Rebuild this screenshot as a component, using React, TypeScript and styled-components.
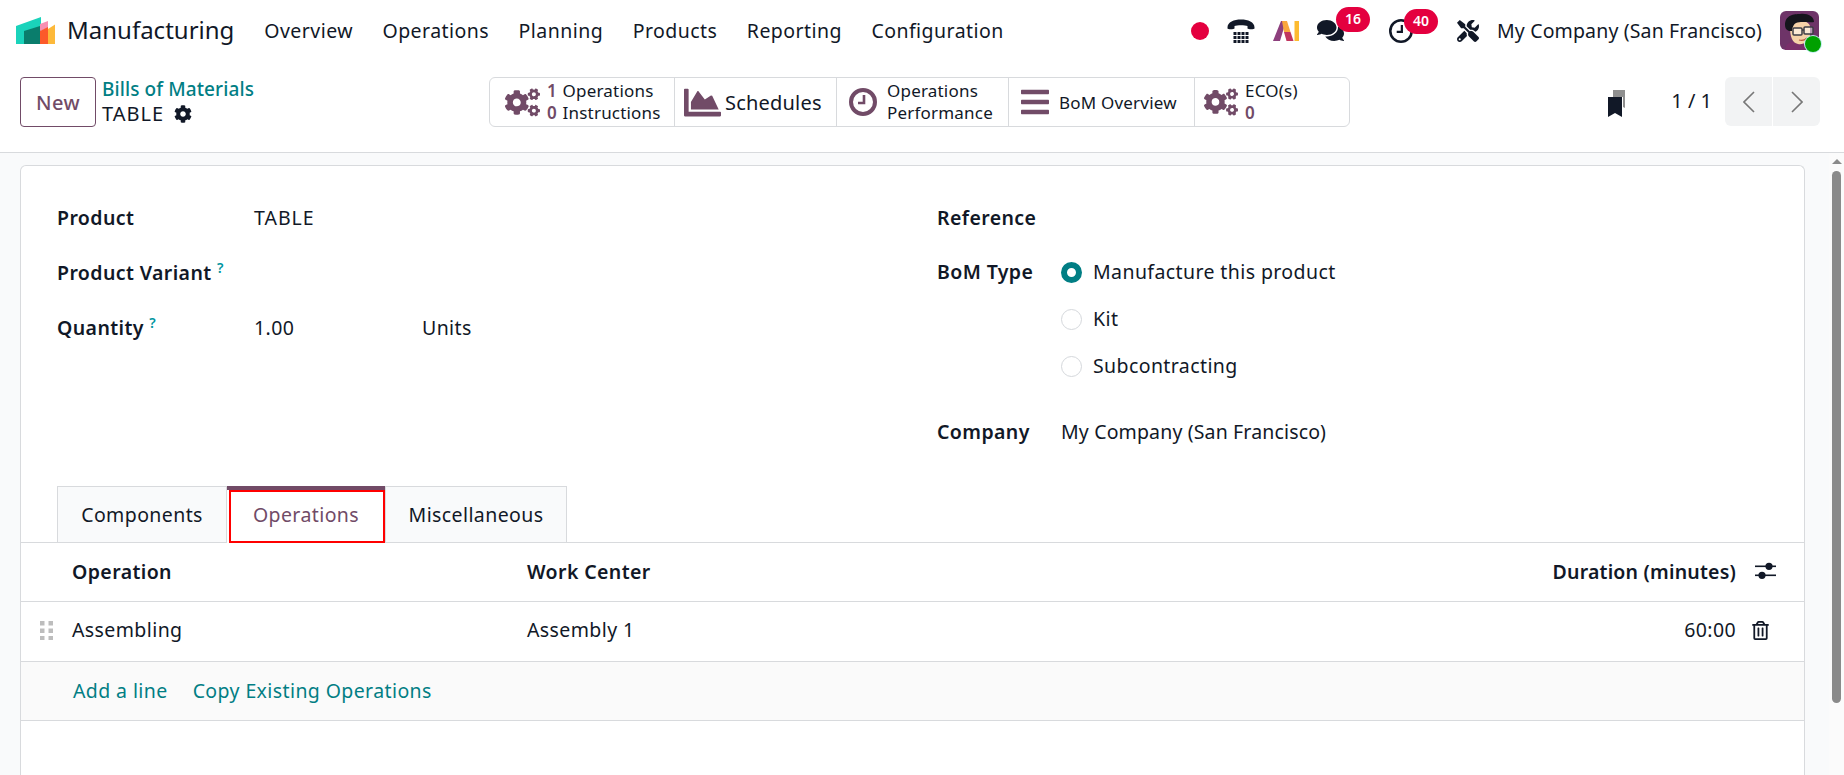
import React, { FC } from 'react';
import styled, { createGlobalStyle } from 'styled-components';
import { FaCog, FaCogs, FaChartArea, FaBars, FaRegTrashAlt, FaComments, FaTools } from 'react-icons/fa';

const INK = '#111827';
const PURPLE = '#714B67';
const TEAL = '#017e84';
const LINE = '#d8dadd';

const GlobalStyle = createGlobalStyle`
    html, body, #root {
        margin: 0;
        height: 100%;
    }

    body {
        font-family: "Noto Sans", "Open Sans", sans-serif;
        font-size: 19.5px;
        letter-spacing: 0.4px;
        color: ${INK};
        background: #fff;
    }

    * {
        box-sizing: border-box;
    }
`;

const Logo: FC = () => (
    <LogoSvg viewBox="0 0 39 27">
        <polygon points="0,9 25,0 25,27 0,27" fill="#1ad3bb" />
        <polygon points="8,14 24,9 24,27 8,27" fill="#0a7d6c" />
        <polygon points="24,7 32,4 32,11 24,14" fill="#f78fb3" />
        <polygon points="24,14 32,10 32,27 24,27" fill="#fc5a2a" />
        <polygon points="32,12 39,7.5 39,27 32,27" fill="#fdb93a" />
    </LogoSvg>
);

const PhoneIcon: FC = () => (
    <svg width="28" height="24" viewBox="0 0 28 24">
        <path d="M0.5 8.5C0.5 3 7 0.5 14 0.5S27.5 3 27.5 8.5V9.5C27.5 10.5 21 10.5 20.500 9.5V7C18 6 10 6 7.5 7V9.5C7 10.5 0.5 10.5 0.5 9.5Z" fill={INK} />
        {[13, 17, 21].map((y) =>
            [6.5, 10.5, 14.5, 18.5].map((x) => <rect key={`${x}-${y}`} x={x} y={y} width="3" height="3" fill={INK} />)
        )}
    </svg>
);

const AiIcon: FC = () => (
    <svg width="26" height="20" viewBox="0 0 26 20">
        <polygon points="0,20 8,0 13,0 7,20" fill="#8d3f7d" />
        <polygon points="9,0 14,0 17.500,11 11,11" fill="#f9a73e" />
        <polygon points="11,11 17.500,11 20.500,20 13.500,20" fill="#c0355f" />
        <polygon points="7.500,20 10.500,12 13,20" fill="#fff" />
        <rect x="21.500" y="0" width="4.500" height="20" fill="#fdbb30" />
    </svg>
);

const ClockIcon: FC<{ size: number; stroke: number; color: string }> = ({ size, stroke, color }) => (
    <svg width={size} height={size} viewBox="0 0 28 28">
        <circle cx="14" cy="14" r={14 - stroke / 2} fill="none" stroke={color} strokeWidth={stroke} />
        <polyline points="15,7 15,15 9,15" fill="none" stroke={color} strokeWidth="2.6" />
    </svg>
);

const SlidersIcon: FC = () => (
    <svg width="21" height="18" viewBox="0 0 21 18">
        <rect x="0" y="3.500" width="21" height="1.600" fill={INK} />
        <circle cx="14" cy="4.300" r="3.600" fill={INK} />
        <rect x="0" y="12.500" width="21" height="1.600" fill={INK} />
        <circle cx="7" cy="13.300" r="3.600" fill={INK} />
    </svg>
);

const BookmarkIcon: FC = () => (
    <svg width="19" height="27" viewBox="0 0 19 27">
        <path d="M5 0H17V18L15 17V7H5Z" fill="#8f8f8f" />
        <path d="M0 7H14V27L7 23L0 27Z" fill={INK} />
    </svg>
);

const DragHandle: FC = () => (
    <svg width="13" height="19" viewBox="0 0 13 19">
        {[0, 7.5, 15].map((y) =>
            [0, 8.5].map((x) => <rect key={`${x}-${y}`} x={x} y={y} width="4.500" height="4.500" fill="#bdbdbd" />)
        )}
    </svg>
);

const Chevron: FC<{ left?: boolean }> = ({ left }) => (
    <svg width="12" height="22" viewBox="0 0 12 22">
        <polyline points={left ? '11,1 1,11 11,21' : '1,1 11,11 1,21'} fill="none" stroke="#777" strokeWidth="1.600" />
    </svg>
);

const AvatarArt: FC = () => (
    <svg width="39" height="39" viewBox="0 0 39 39">
        <rect width="39" height="39" fill="#6e3468" />
        <path d="M5 39C6 32 11 30 19 30S33 32 35 39Z" fill="#7a2f6a" />
        <path d="M10 16C10 8 28 8 30 15V24C30 31 23 34 18 33C12 32 10 25 10 16Z" fill="#f6d2a8" />
        <path d="M5 14C5 4 14 3 20 3C27 2 34 5 34 11C30 12 21 10 16 12C14 13 12 16 12 20H9C6 19 5 17 5 14Z" fill="#15151c" />
        <rect x="13" y="17" width="9" height="7" rx="1" fill="#fff" fillOpacity="0.5" stroke="#3d3d44" strokeWidth="1.500" />
        <rect x="24" y="16" width="9" height="7" rx="1" fill="#fff" fillOpacity="0.5" stroke="#3d3d44" strokeWidth="1.500" />
        <path d="M22 19H24" stroke="#3d3d44" strokeWidth="1.500" />
        <path d="M19 29C22 30 25 29 27 27" stroke="#b5533c" strokeWidth="1.200" fill="none" />
    </svg>
);

export default function App() {
    return (
        <Page>
            <GlobalStyle />
            <NavBar>
                <Logo />
                <AppName>Manufacturing</AppName>
                <Menu>
                    {['Overview', 'Operations', 'Planning', 'Products', 'Reporting', 'Configuration'].map((m) => (
                        <MenuItem key={m}>{m}</MenuItem>
                    ))}
                </Menu>
                <Systray>
                    <RecordDot />
                    <PhoneIcon />
                    <AiIcon />
                    <BadgeHolder $next={45}>
                        <FaComments size={27} color={INK} />
                        <Badge $left={19}>16</Badge>
                    </BadgeHolder>
                    <BadgeHolder $next={44}>
                        <ClockIcon size={24} stroke={3} color={INK} />
                        <Badge $left={15}>40</Badge>
                    </BadgeHolder>
                    <FaTools size={22} color={INK} />
                    <CompanyName>My Company (San Francisco)</CompanyName>
                    <Avatar>
                        <AvatarArt />
                        <OnlineDot />
                    </Avatar>
                </Systray>
            </NavBar>

            <ControlPanel>
                <LeftPart>
                    <NewButton>New</NewButton>
                    <Breadcrumbs>
                        <CrumbLink>Bills of Materials</CrumbLink>
                        <CrumbCurrent>
                            TABLE <FaCog size={18} />
                        </CrumbCurrent>
                    </Breadcrumbs>
                </LeftPart>
                <StatGroup>
                    <StatButton $width={185}>
                        <StatIcon $size={35}><FaCogs size={35} /></StatIcon>
                        <StatText>
                            <StatLine><StatNumber>1</StatNumber> Operations</StatLine>
                            <StatLine><StatNumber>0</StatNumber> Instructions</StatLine>
                        </StatText>
                    </StatButton>
                    <StatButton $width={162}>
                        <StatIcon $size={37}><FaChartArea size={37} /></StatIcon>
                        <StatSingle $size={20} $gap={4}>Schedules</StatSingle>
                    </StatButton>
                    <StatButton $width={172} $pad={12}>
                        <StatIcon $size={28}><ClockIcon size={28} stroke={4} color={PURPLE} /></StatIcon>
                        <StatText $gap={10}>
                            <StatLine>Operations</StatLine>
                            <StatLine>Performance</StatLine>
                        </StatText>
                    </StatButton>
                    <StatButton $width={186} $pad={12}>
                        <StatIcon $size={28}><FaBars size={32} /></StatIcon>
                        <StatSingle $size={17} $gap={10}>BoM Overview</StatSingle>
                    </StatButton>
                    <StatButton $width={156}>
                        <StatIcon $size={34}><FaCogs size={34} /></StatIcon>
                        <StatText>
                            <StatLine>ECO(s)</StatLine>
                            <StatLine><StatNumber>0</StatNumber></StatLine>
                        </StatText>
                    </StatButton>
                </StatGroup>
                <RightPart>
                    <BookmarkHolder><BookmarkIcon /></BookmarkHolder>
                    <PagerText>1 / 1</PagerText>
                    <PagerButtons>
                        <PagerButton><Chevron left /></PagerButton>
                        <PagerButton><Chevron /></PagerButton>
                    </PagerButtons>
                </RightPart>
            </ControlPanel>

            <ContentRow>
                <Content>
                    <Sheet>
                        <FormGrid>
                            <FormColumn>
                                <FieldRow>
                                    <Label $width={197}>Product</Label>
                                    <UpperValue>TABLE</UpperValue>
                                </FieldRow>
                                <FieldRow>
                                    <Label $width={197}>Product Variant <Help>?</Help></Label>
                                </FieldRow>
                                <FieldRow>
                                    <Label $width={197}>Quantity <Help>?</Help></Label>
                                    <QuantityValue>1.00</QuantityValue>
                                    <span>Units</span>
                                </FieldRow>
                            </FormColumn>
                            <FormColumn>
                                <FieldRow>
                                    <Label $width={124}>Reference</Label>
                                </FieldRow>
                                <BomRow>
                                    <BomLabel $width={124}>BoM Type</BomLabel>
                                    <div>
                                        <RadioRow><Radio $checked />Manufacture this product</RadioRow>
                                        <RadioRow><Radio />Kit</RadioRow>
                                        <RadioRow><Radio />Subcontracting</RadioRow>
                                    </div>
                                </BomRow>
                                <CompanyRow>
                                    <Label $width={124}>Company</Label>
                                    <CompanyValue>My Company (San Francisco)</CompanyValue>
                                </CompanyRow>
                            </FormColumn>
                        </FormGrid>

                        <Tabs>
                            <Tab $width={170}>Components</Tab>
                            <Tab $width={158} $active>
                                Operations
                                <Highlight />
                            </Tab>
                            <Tab $width={182}>Miscellaneous</Tab>
                        </Tabs>

                        <Table>
                            <thead>
                                <tr>
                                    <HandleCell as="th" />
                                    <HeadCell $width={455}>Operation</HeadCell>
                                    <HeadCell>Work Center</HeadCell>
                                    <DurationHead $right>Duration (minutes)</DurationHead>
                                    <ActionCell as="th" $pad={19}><SlidersIcon /></ActionCell>
                                </tr>
                            </thead>
                            <tbody>
                                <tr>
                                    <HandleCell><DragHandle /></HandleCell>
                                    <BodyCell>Assembling</BodyCell>
                                    <BodyCell>Assembly 1</BodyCell>
                                    <BodyCell $right>60:00</BodyCell>
                                    <ActionCell $pad={15}><FaRegTrashAlt size={19} /></ActionCell>
                                </tr>
                                <tr>
                                    <AddCell colSpan={5}>
                                        <AddLink>Add a line</AddLink>
                                        <AddLink>Copy Existing Operations</AddLink>
                                    </AddCell>
                                </tr>
                            </tbody>
                        </Table>
                    </Sheet>
                </Content>
                <ScrollRail>
                    <ScrollArrow />
                    <ScrollThumb />
                </ScrollRail>
            </ContentRow>
        </Page>
    );
}

const Page = styled.div`
    display: flex;
    flex-direction: column;
    height: 100vh;
    overflow: hidden;
`;

const NavBar = styled.header`
    display: flex;
    align-items: center;
    flex: none;
    height: 61px;
    padding: 0 25px 0 16px;
    background: #fff;
`;

const LogoSvg = styled.svg`
    width: 39px;
    height: 27px;
    margin-top: -1px;
`;

const AppName = styled.div`
    margin: -2px 0 0 12px;
    font-size: 24px;
    letter-spacing: 0;
    white-space: nowrap;
`;

const Menu = styled.nav`
    display: flex;
    margin-left: 30px;
    gap: 29.5px;
    letter-spacing: 0.45px;
`;

const MenuItem = styled.div`
    white-space: nowrap;
`;

const Systray = styled.div`
    display: flex;
    align-items: center;
    margin-left: auto;
    gap: 18px;
`;

const RecordDot = styled.div`
    width: 18px;
    height: 18px;
    border-radius: 50%;
    background: #e4003f;
`;

const BadgeHolder = styled.div<{ $next: number }>`
    position: relative;
    display: flex;
    margin-right: ${({ $next }) => $next - 18}px;
`;

const Badge = styled.span<{ $left: number }>`
    position: absolute;
    top: -10px;
    left: ${({ $left }) => $left}px;
    width: 34px;
    height: 25px;
    border-radius: 13px;
    background: #e4003f;
    color: #fff;
    font-size: 14px;
    font-weight: 600;
    letter-spacing: 0;
    line-height: 23px;
    text-align: center;
`;

const CompanyName = styled.div`
    width: 265px;
    letter-spacing: 0.15px;
    white-space: nowrap;
`;

const Avatar = styled.div`
    position: relative;
    width: 39px;
    height: 39px;
    border-radius: 6px;

    svg {
        display: block;
        border-radius: 6px;
    }
`;

const OnlineDot = styled.span`
    position: absolute;
    right: -2px;
    bottom: -2px;
    width: 16px;
    height: 16px;
    border-radius: 50%;
    background: #00a000;
    box-shadow: 0 0 0 1px #bfeef0;
`;

const ControlPanel = styled.div`
    display: flex;
    flex: none;
    height: 92px;
    padding: 16px 24px 0 20px;
    border-bottom: 1px solid ${LINE};
`;

const LeftPart = styled.div`
    display: flex;
    width: 469px;
    height: 50px;
`;

const NewButton = styled.div`
    display: flex;
    align-items: center;
    justify-content: center;
    width: 76px;
    height: 50px;
    border: 1px solid ${PURPLE};
    border-radius: 4px;
    color: ${PURPLE};
    font-weight: 500;
    font-size: 20px;
`;

const Breadcrumbs = styled.div`
    display: flex;
    flex-direction: column;
    margin-left: 6px;
`;

const CrumbLink = styled.div`
    height: 26px;
    color: ${TEAL};
    font-weight: 500;
    font-size: 19px;
    letter-spacing: 0.1px;
    line-height: 24px;
    white-space: nowrap;
`;

const CrumbCurrent = styled.div`
    display: flex;
    align-items: center;
    gap: 10px;
    font-size: 20px;
    letter-spacing: 1px;
    line-height: 26px;
`;

const StatGroup = styled.div`
    display: flex;
    width: 861px;
    height: 50px;
    border: 1px solid ${LINE};
    border-radius: 6px;
`;

const StatButton = styled.div<{ $width: number; $pad?: number }>`
    display: flex;
    align-items: center;
    flex: none;
    width: ${({ $width }) => $width}px;
    padding-left: ${({ $pad }) => $pad ?? 9}px;
    border-right: 1px solid ${LINE};

    &:first-child {
        padding-left: 15px;
    }

    &:last-child {
        width: auto;
        flex: 1;
        border-right: 0;
    }
`;

const StatIcon = styled.div<{ $size: number }>`
    display: flex;
    flex: none;
    justify-content: center;
    width: ${({ $size }) => $size}px;
    color: ${PURPLE};
`;

const StatText = styled.div<{ $gap?: number }>`
    display: flex;
    flex-direction: column;
    margin-left: ${({ $gap }) => $gap ?? 7}px;
    font-size: 17px;
    letter-spacing: 0.2px;
    line-height: 22px;
`;

const StatLine = styled.div`
    white-space: nowrap;
`;

const StatNumber = styled.span`
    display: inline-block;
    margin-right: 1px;
    color: ${PURPLE};
    font-weight: 600;
`;

const StatSingle = styled.div<{ $size: number; $gap: number }>`
    margin-left: ${({ $gap }) => $gap}px;
    font-size: ${({ $size }) => $size}px;
    letter-spacing: 0.2px;
    white-space: nowrap;
`;

const RightPart = styled.div`
    display: flex;
    align-items: flex-start;
    margin-left: auto;
`;

const BookmarkHolder = styled.div`
    margin-top: 13px;
    height: 27px;
`;

const PagerText = styled.div`
    margin-left: 44px;
    padding-top: 10px;
    font-size: 20px;
    letter-spacing: 0;
    white-space: nowrap;
`;

const PagerButtons = styled.div`
    display: flex;
    margin-left: 13px;
    gap: 1px;
`;

const PagerButton = styled.div`
    display: flex;
    align-items: center;
    justify-content: center;
    width: 47px;
    height: 49px;
    background: #f2f3f4;

    &:first-child {
        border-radius: 6px 0 0 6px;
    }

    &:last-child {
        border-radius: 0 6px 6px 0;
    }
`;

const ContentRow = styled.div`
    display: flex;
    flex: 1;
    min-height: 0;
    background: #f9fafb;
`;

const Content = styled.main`
    flex: 1;
    min-width: 0;
    padding: 12px 24px 0 20px;
    overflow: hidden;
`;

const ScrollRail = styled.div`
    display: flex;
    flex-direction: column;
    align-items: center;
    flex: none;
    width: 15px;
    background: #fbfbfb;
`;

const ScrollArrow = styled.div`
    width: 0;
    height: 0;
    margin: 6px 0 7px;
    border-left: 5px solid transparent;
    border-right: 5px solid transparent;
    border-bottom: 5px solid #8a8a8a;
`;

const ScrollThumb = styled.div`
    width: 9px;
    height: 532px;
    border-radius: 5px;
    background: #8a8a8a;
`;

const Sheet = styled.section`
    height: 695px;
    border: 1px solid ${LINE};
    border-bottom: 0;
    border-radius: 6px 6px 0 0;
    background: #fff;
    padding-top: 24px;
`;

const FormGrid = styled.div`
    display: grid;
    grid-template-columns: 880px 1fr;
    padding-left: 36px;
`;

const FormColumn = styled.div`
    display: flex;
    flex-direction: column;
`;

const FieldRow = styled.div`
    display: flex;
    align-items: center;
    height: 55px;
`;

const BomRow = styled.div`
    display: flex;
    padding-top: 4px;
    height: 145px;
`;

const CompanyRow = styled(FieldRow)`
    height: 46px;
    padding-bottom: 3px;
    margin-top: 20px;
    margin-bottom: 30px;
`;

const Label = styled.div<{ $width: number }>`
    flex: none;
    width: ${({ $width }) => $width}px;
    font-weight: 600;
`;

const BomLabel = styled(Label)`
    line-height: 45px;
`;

const UpperValue = styled.span`
    letter-spacing: 1px;
`;

const CompanyValue = styled.span`
    letter-spacing: 0.15px;
`;

const Help = styled.sup`
    color: #0095a0;
    font-size: 14px;
    font-weight: 600;
    line-height: 0;
`;

const QuantityValue = styled.span`
    width: 168px;
`;

const RadioRow = styled.div`
    display: flex;
    align-items: center;
    height: 47px;
    padding-bottom: 2px;
    gap: 11px;
`;

const Radio = styled.span<{ $checked?: boolean }>`
    width: 21px;
    height: 21px;
    margin-top: 2px;
    border-radius: 50%;
    border: ${({ $checked }) => ($checked ? `6px solid ${TEAL}` : `1px solid #d5d8dc`)};
    background: #fff;
`;

const Tabs = styled.div`
    display: flex;
    height: 57px;
    padding-left: 36px;
    border-bottom: 1px solid ${LINE};
`;

const Tab = styled.div<{ $width: number; $active?: boolean }>`
    position: relative;
    display: flex;
    align-items: center;
    justify-content: center;
    width: ${({ $width }) => $width}px;
    height: ${({ $active }) => ($active ? '57px' : '56px')};
    padding-bottom: ${({ $active }) => ($active ? '4px' : '1px')};
    border: 1px solid ${LINE};
    border-left-width: ${({ $active }) => ($active ? '0' : '1px')};
    border-right-width: ${({ $active }) => ($active ? '0' : '1px')};
    border-top: ${({ $active }) => ($active ? `4px solid ${PURPLE}` : `1px solid ${LINE}`)};
    border-bottom: 0;
    background: ${({ $active }) => ($active ? '#fff' : '#f9fafb')};
    color: ${({ $active }) => ($active ? PURPLE : INK)};
`;

const Highlight = styled.span`
    position: absolute;
    top: 0;
    left: 2px;
    right: 0;
    bottom: 0;
    border: 2px solid #f00;
`;

const Table = styled.table`
    width: 100%;
    border-collapse: collapse;
`;

const HeadCell = styled.th<{ $width?: number; $right?: boolean }>`
    width: ${({ $width }) => ($width ? `${$width}px` : 'auto')};
    height: 58px;
    padding: 0;
    border-bottom: 1px solid ${LINE};
    text-align: ${({ $right }) => ($right ? 'right' : 'left')};
    font-weight: 600;
`;

const DurationHead = styled(HeadCell)`
    letter-spacing: 0.2px;
`;

const BodyCell = styled.td<{ $right?: boolean }>`
    height: 60px;
    padding: 0 0 3px;
    border-bottom: 1px solid ${LINE};
    text-align: ${({ $right }) => ($right ? 'right' : 'left')};
`;

const HandleCell = styled.td`
    width: 51px;
    padding: 0 0 1px 19px;
    border-bottom: 1px solid ${LINE};
    text-align: left;

    svg {
        display: block;
    }
`;

const ActionCell = styled.td<{ $pad: number }>`
    width: 68px;
    padding: 0 0 2px ${({ $pad }) => $pad}px;
    border-bottom: 1px solid ${LINE};
    text-align: left;

    svg {
        display: block;
    }
`;

const AddCell = styled.td`
    height: 59px;
    padding: 0 0 1px 52px;
    border-bottom: 1px solid ${LINE};
    background: #fafafa;
`;

const AddLink = styled.span`
    margin-right: 25px;
    color: ${TEAL};
    letter-spacing: 0.4px;
`;
